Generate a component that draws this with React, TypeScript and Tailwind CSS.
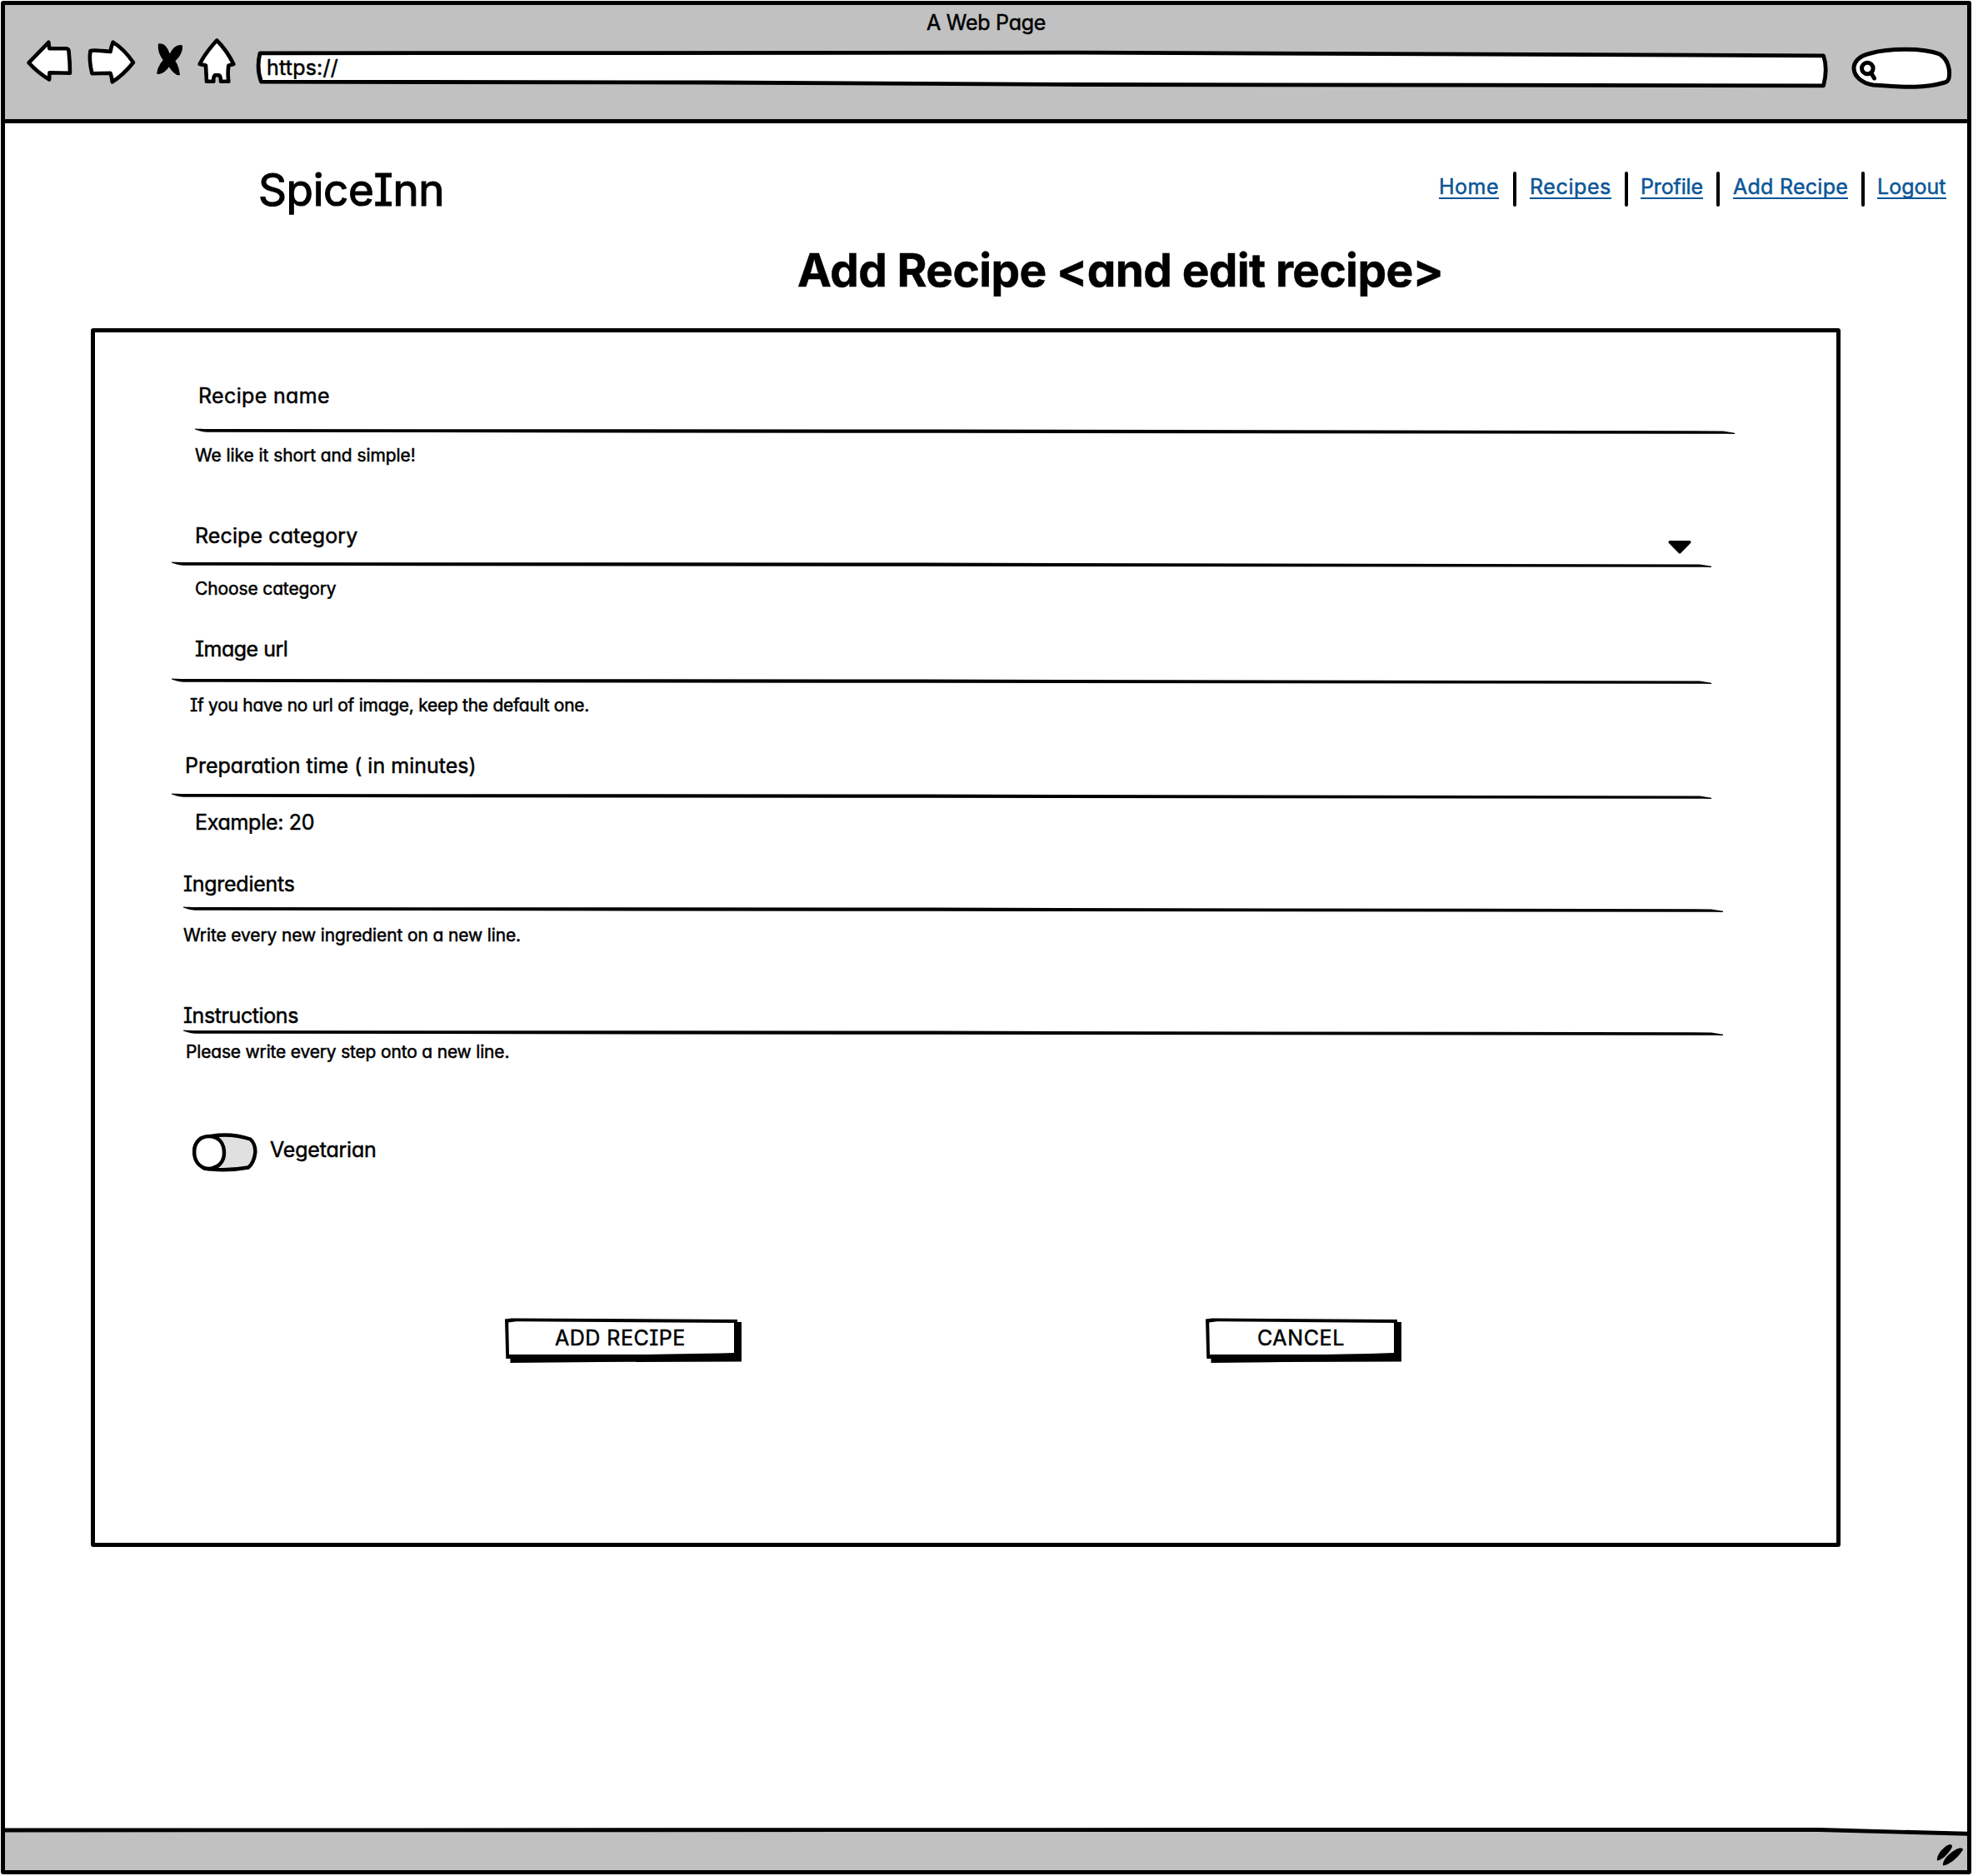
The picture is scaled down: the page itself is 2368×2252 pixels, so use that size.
type RuleProps = { className: string };

/* Pen-drawn rule with tapered ends */
function Rule({ className }: RuleProps) {
  return (
    <svg className={`block h-2 w-[1848px] ${className}`} viewBox="0 0 1848 8" fill="#000">
      <path d="M0 1.6 C5 2 9 2 14 2 L900 2.6 L1834 4.4 L1848 6.8 L1848 8 L1838 7.8 L900 6.8 L14 5.8 C8 5.4 4 4 0 2.6 Z" />
    </svg>
  );
}

type FieldProps = {
  label: string;
  hint: string;
  labelClass: string;
  ruleClass: string;
  hintClass: string;
  caret?: boolean;
};

function Field({ label, hint, labelClass, ruleClass, hintClass, caret }: FieldProps) {
  return (
    <div className="flex flex-col items-start">
      <div className={`flex h-8 items-start leading-8 ${labelClass}`}>
        <label className="whitespace-nowrap">{label}</label>
        {caret && (
          <svg className="mt-[22px] ml-auto h-4 w-7 shrink-0" viewBox="0 0 28 16">
            <path d="M2 0 H26 Q28.5 1 27 3 L15 15.2 Q14 16 13 15.2 L1 3 Q-.5 1 2 0Z" />
          </svg>
        )}
      </div>
      <Rule className={ruleClass} />
      <p className={`whitespace-nowrap ${hintClass}`}>{hint}</p>
    </div>
  );
}

function BrowserIcons() {
  return (
    <svg className="block h-[60px] w-[260px]" viewBox="30 45 260 60" fill="#fff" stroke="#000" strokeWidth="4.6" strokeLinejoin="round" strokeLinecap="round">
      <path d="M34.5 75.3 L58.3 50.8 L59.3 58.3 L79.5 58.3 Q82 58.5 82.500 61 Q84 75 84 87.800 L59.500 87.200 L59.100 95.500 Q45 87 34.500 75.300Z" />
      <path d="M108.5 61 Q112 59.5 132.5 62 Q133.5 56 135.6 50.6 Q149 59 160 75 Q148 90 134.8 98.3 Q134 92 132.5 87.8 L110.5 88.3 Q106.5 72 108.5 61Z" />
      <g fill="#000" stroke="none">
        <path d="M190 52.500 Q199 50.500 203.500 64 Q215 76 216 90 Q210 92 202 79 Q188 66 190 52.500Z" />
        <path d="M219 54.500 Q210 52 203.500 65 Q189 76 188 88.500 Q196 91 204.500 78 Q220 67 219 54.500Z" />
      </g>
      <path d="M260.2 48.5 Q272 60 280.3 77 L274.3 78.6 Q273 88 274.3 97.8 L265 97.8 Q265 91 263 90.3 L257.8 90.3 Q256 92 256.3 97.8 L248 97.8 L247 78.5 L239.7 77 Q246 64 260.2 48.5Z" />
    </svg>
  );
}

function SearchBox() {
  return (
    <svg className="block h-[54px] w-[124px]" viewBox="2221 55 124 54" fill="#fff" stroke="#000" strokeWidth="5" strokeLinejoin="round" strokeLinecap="round">
      <path d="M2248 102 C2220 97 2216 70 2245 64 C2266 58 2308 57 2328 65 C2338 71 2341 84 2339 94 Q2338 98 2334 99 C2310 106 2290 105 2248 102Z" />
      <circle cx="2241.3" cy="82" r="6.8" />
      <path d="M2246 88 L2249.5 94" />
    </svg>
  );
}

function Toggle() {
  return (
    <svg className="block h-12 w-20 shrink-0" viewBox="230 1360 80 48" stroke="#000" strokeWidth="4.4" strokeLinejoin="round">
      <path fill="#e0e0e0" d="M241 1367.500 Q272 1359 300.500 1368.500 Q306.500 1374 306.400 1384 Q305 1397 298 1402.500 Q270 1407.500 245 1403.500 Q235 1396 233.200 1384 Q233 1374 241 1367.500Z" />
      <path fill="#fff" d="M251 1365 C264 1365 269 1375 269 1385 C269 1395 263 1403.500 250 1404 C238 1403 233 1393 233.200 1384 C233 1374 239 1365 251 1365Z" />
    </svg>
  );
}

type SketchButtonProps = { text: string; width: number; className: string; textClass: string };

function SketchButton({ text, width, className, textClass }: SketchButtonProps) {
  return (
    <button type="button" className={`relative block h-[54px] pb-[6px] ${className}`}>
      <svg className="absolute inset-0 h-full w-full" viewBox={`0 0 ${width} 54`}>
        <path d={`M6 5 H${width} V52.5 L${width * 0.4} 53 L6.5 54Z`} />
        <path d={`M0 1.5 L8 .5 L${width - 5} 2 V48 L1.3 49 Z`} />
        <path fill="#fff" d={`M4.2 5.5 L14 4.3 L${width - 9} 6 V42 Q${width * 0.7} 44 ${width * 0.5} 44 L5 44Z`} />
      </svg>
      <span className={`relative block text-left leading-8 whitespace-nowrap ${textClass}`}>{text}</span>
    </button>
  );
}

const Separator = ({ className }: { className: string }) => (
  <span className={`h-[42px] w-1 rounded-sm bg-black ${className}`} />
);

export default function App() {
  const link = "block h-[33px] border-b-2 border-[#0b5596] leading-[37px] whitespace-nowrap";
  return (
    <div className="flex h-[2252px] w-[2368px] flex-col bg-white pt-px pl-px font-['Inter',sans-serif] text-[25px] text-black [-webkit-text-stroke:0.5px] [font-feature-settings:'cv11','cv08']">
      <div className="flex h-[2249px] w-[2365px] flex-col rounded-[3px] border-[5px] border-black">
        <header className="flex h-[142px] shrink-0 flex-col border-b-[5px] border-black bg-[#c1c1c1]">
          <h2 className="mt-[5px] ml-[1106px] w-fit leading-8 tracking-[-0.25px] whitespace-nowrap">A Web Page</h2>
          <div className="mt-[2px] flex">
            <div className="ml-6">
              <BrowserIcons />
            </div>
            <div className="relative mt-[15px] ml-[16px] h-[46px] w-[1889px]">
              <svg className="absolute inset-0 h-full w-full" viewBox="306 60 1889 46" fill="#fff" stroke="#000" strokeWidth="4.8" strokeLinejoin="round">
                <path d="M312 63.800 L1300 63.200 L2188.500 66.800 Q2194 82 2188.500 102.800 L1300 101.500 L850 99 L313.500 98.200 Q307.500 82 312 63.800Z" />
              </svg>
              <span className="relative ml-[14px] block w-fit pt-[5px] leading-8 tracking-[0.2px]">https://</span>
            </div>
            <div className="mt-[10px] ml-[26px]">
              <SearchBox />
            </div>
          </div>
        </header>

        <main className="flex grow flex-col">
          <div className="flex h-[112px]">
            <h1 className="mt-[48px] ml-[304px] text-[53px] leading-[64px] tracking-[-0.4px] [-webkit-text-stroke:1.2px]">SpiceInn</h1>
            <nav className="mt-[58px] mr-[25px] ml-auto flex text-[#0b5596]">
              <a className={`${link} w-[72px] tracking-[0.5px]`}>Home</a>
              <Separator className="mr-4 ml-[17px]" />
              <a className={`${link} w-[98px] tracking-[0.6px]`}>Recipes</a>
              <Separator className="mr-[15px] ml-4" />
              <a className={`${link} w-[75px] tracking-[-0.13px]`}>Profile</a>
              <Separator className="mx-4" />
              <a className={`${link} w-[138px] tracking-[0.27px]`}>Add Recipe</a>
              <Separator className="mr-[15px] ml-4" />
              <a className={`${link} w-[83px]`}>Logout</a>
            </nav>
          </div>
          <h2 className="mt-[30px] ml-[951px] w-fit text-[55px] leading-[68px] font-bold tracking-[-0.65px] whitespace-nowrap">
            Add Recipe &lt;and edit recipe&gt;
          </h2>

          <form className="mt-[36px] ml-[103px] flex h-[1463px] w-[2100px] flex-col rounded-[3px] border-[5px] border-black pt-[60px]">
            <Field label="Recipe name" hint="We like it short and simple!" labelClass="ml-[124px] tracking-[0.35px]" ruleClass="mt-[22px] ml-[120px]" hintClass="mt-3 ml-[120px] text-[21px] leading-7 tracking-[-0.08px]" />
            <Field caret label="Recipe category" hint="Choose category" labelClass="mt-[66px] ml-[120px] w-[1796px] tracking-[0.1px]" ruleClass="mt-[14px] ml-[92px]" hintClass="mt-3 ml-[120px] text-[21px] leading-7 tracking-[-0.13px]" />
            <Field label="Image url" hint="If you have no url of image, keep the default one." labelClass="mt-[42px] ml-[120px] tracking-[-0.5px]" ruleClass="mt-[18px] ml-[92px]" hintClass="mt-3 ml-[114px] text-[21px] leading-7 tracking-[-0.28px]" />
            <Field label="Preparation time ( in minutes)" hint="Example: 20" labelClass="mt-[42px] ml-[108px]" ruleClass="mt-4 ml-[92px]" hintClass="mt-3 ml-[120px] leading-8 tracking-[-0.3px]" />
            <Field label="Ingredients" hint="Write every new ingredient on a new line." labelClass="mt-[42px] ml-[106px] tracking-[-0.27px]" ruleClass="mt-[10px] ml-[106px]" hintClass="mt-[14px] ml-[106px] text-[21px] leading-7 tracking-[-0.13px]" />
            <Field label="Instructions" hint="Please write every step onto a new line." labelClass="mt-[66px] ml-[106px] tracking-[-0.4px]" ruleClass="ml-[106px]" hintClass="mt-[6px] ml-[109px] text-[21px] leading-7 tracking-[-0.18px]" />
            <div className="mt-[82px] ml-[116px] flex">
              <Toggle />
              <span className="mt-[5px] ml-[14px] leading-8 tracking-[-0.2px]">Vegetarian</span>
            </div>
            <div className="mt-[175px] ml-[492px] flex">
              <SketchButton text="ADD RECIPE" width={284} className="w-[284px]" textClass="pl-[60px] tracking-[0.5px]" />
              <SketchButton text="CANCEL" width={235} className="ml-[557px] w-[235px]" textClass="pl-[62px] tracking-[0.6px]" />
            </div>
          </form>
        </main>

        <footer className="relative h-[52px] shrink-0">
          <svg className="absolute inset-0 h-full w-full" viewBox="6 2193 2355 52">
            <path fill="#c1c1c1" stroke="#000" strokeWidth="4.8" d="M0 2197 L1500 2196.500 L2183 2196.500 L2370 2201.500 V2260 H0Z" />
            <path d="M2325 2233.500 C2324 2225 2336 2214 2341 2214 Q2344 2215 2342.500 2218 C2339 2225 2331 2233 2325 2233.500Z M2332 2239.500 C2331 2230 2347 2219 2352 2218.500 Q2358 2218 2355 2222 C2349 2231 2339 2239 2332 2239.500Z" />
          </svg>
        </footer>
      </div>
    </div>
  );
}
